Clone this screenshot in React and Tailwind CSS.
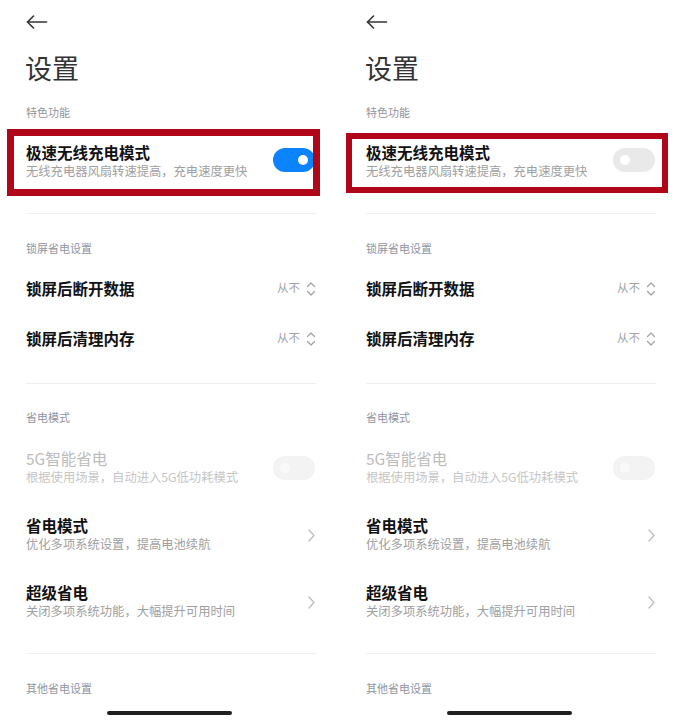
import React from 'react';

const FONT = { fontFamily: '"Noto Sans CJK SC", "Noto Sans", sans-serif' };

const BackArrow = () => (
  <svg width="22" height="14" viewBox="0 0 22 14" fill="none" stroke="#333" strokeWidth="1.6" strokeLinecap="round" strokeLinejoin="round">
    <path d="M20.5 7H1.5" />
    <path d="M7.5 1L1.5 7l6 6" />
  </svg>
);

const UpDown = () => (
  <svg width="10" height="16" viewBox="0 0 10 16" fill="none" stroke="#a3a3a3" strokeWidth="1.3" strokeLinecap="round" strokeLinejoin="round">
    <path d="M1.5 5.5L5 2l3.5 3.5" />
    <path d="M1.5 10.5L5 14l3.5-3.5" />
  </svg>
);

const Chevron = () => (
  <svg width="7" height="13" viewBox="0 0 7 13" fill="none" stroke="#bdbdbd" strokeWidth="1.3" strokeLinecap="round" strokeLinejoin="round">
    <path d="M1 1l5 5.5L1 12" />
  </svg>
);

function Toggle({ on, disabled }) {
  if (on) {
    return (
      <div className="flex h-[24px] w-[42px] items-center justify-end rounded-full bg-[#0d84ff] pr-[7px]">
        <div className="h-[10px] w-[10px] rounded-full bg-white" />
      </div>
    );
  }
  return (
    <div className={`flex h-[24px] w-[42px] items-center rounded-full pl-[7px] ${disabled ? 'bg-[#f3f3f3]' : 'bg-[#e9e9e9]'}`}>
      <div className={`h-[10px] w-[10px] rounded-full ${disabled ? 'bg-[#f9f9f9]' : 'bg-white'}`} />
    </div>
  );
}

const Header = ({ children, pt = 'pt-[26px]', h = 'h-[50px]' }) => (
  <div className={`${h} ${pt} px-[26px]`}>
    <div className="text-[11px] leading-[16px] text-[#8f949e]">{children}</div>
  </div>
);

const Divider = ({ mt }) => (
  <div className={`${mt} mx-[26px] mr-[24px] h-px bg-[#efefef]`} />
);

function TwoLine({ title, sub, disabled, right, h = 'h-[67px]' }) {
  return (
    <div className={`${h} flex items-center justify-between pl-[26px] pr-[25px]`}>
      <div className="flex flex-col pb-[3px]">
        <div className={`text-[15.5px] leading-[20px] font-bold ${disabled ? 'text-[#bcbcbc] font-normal' : 'text-[#111]'}`}>{title}</div>
        <div className={`text-[12.3px] leading-[18px] ${disabled ? 'text-[#c6c6c6]' : 'text-[#a0a0a0]'}`}>{sub}</div>
      </div>
      {right}
    </div>
  );
}

function ValueRow({ title }) {
  return (
    <div className="flex h-[50px] items-center justify-between pl-[26px] pr-[24px]">
      <div className="pb-[3px] text-[15.5px] leading-[20px] font-bold text-[#111]">{title}</div>
      <div className="flex items-center gap-[6px]">
        <span className="pb-[2px] text-[11.5px] text-[#a3a3a3]">从不</span>
        <UpDown />
      </div>
    </div>
  );
}

function Panel({ on }) {
  return (
    <div className="relative flex h-[720px] w-[340px] flex-col overflow-hidden bg-white" style={FONT}>
      <div className="flex h-[44px] items-center pl-[26px]">
        <BackArrow />
      </div>
      <div className="h-[52px] pl-[25px] text-[27px] leading-[48px] text-[#333]">设置</div>
      <Header h="h-[32px]" pt="pt-[8px]">特色功能</Header>

      <div className="relative flex h-[70px] items-center justify-between pl-[26px] pr-[25px]">
        <div className="flex flex-col pb-[4px]">
          <div className="text-[15.5px] leading-[20px] font-bold text-[#111]">极速无线充电模式</div>
          <div className="text-[12.3px] leading-[18px] text-[#a0a0a0]">无线充电器风扇转速提高，充电速度更快</div>
        </div>
        <div className="mb-[6px]">
          <Toggle on={on} />
        </div>
        {on ? (
          <div className="pointer-events-none absolute left-[7px] top-[1px] h-[67px] w-[313px] border-[7px] border-[#b0061a]" />
        ) : (
          <div className="pointer-events-none absolute left-[6px] top-[5px] h-[60px] w-[322px] border-[6px] border-[#b0061a]" />
        )}
      </div>

      <Divider mt="mt-[15px]" />
      <Header>锁屏省电设置</Header>
      <ValueRow title="锁屏后断开数据" />
      <ValueRow title="锁屏后清理内存" />

      <Divider mt="mt-[19px]" />
      <Header pt="pt-[25px]">省电模式</Header>
      <TwoLine h="h-[68px]" title="5G智能省电" sub="根据使用场景，自动进入5G低功耗模式" disabled right={<Toggle disabled />} />
      <TwoLine title="省电模式" sub="优化多项系统设置，提高电池续航" right={<Chevron />} />
      <TwoLine title="超级省电" sub="关闭多项系统功能，大幅提升可用时间" right={<Chevron />} />

      <Divider mt="mt-[17px]" />
      <Header>其他省电设置</Header>

      <div className="absolute bottom-[5px] left-[107px] h-[4px] w-[125px] rounded-full bg-[#1f1f1f]" />
    </div>
  );
}

export default function App() {
  return (
    <div className="flex h-[720px] w-[680px] bg-white">
      <Panel on />
      <Panel on={false} />
    </div>
  );
}
